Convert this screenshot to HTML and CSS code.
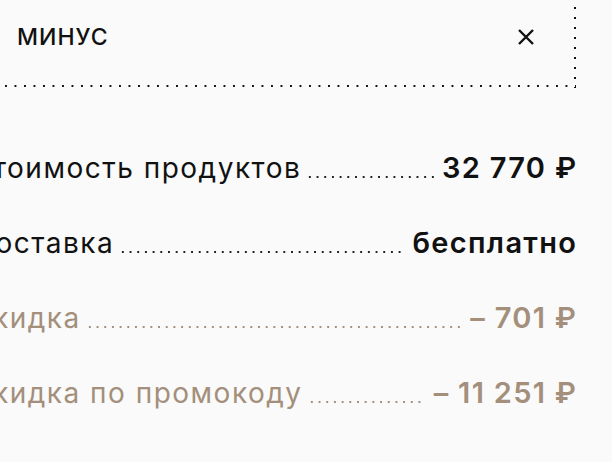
FILE: index.html
```html
<!DOCTYPE html>
<html lang="ru">
<head>
    <meta charset="UTF-8">
    <meta name="viewport" content="width=device-width, initial-scale=1.0">
    <title>Корзина</title>
    <link rel="stylesheet" href="styles.css">
</head>
<body>

    <div class="cart-summary">

        <!-- Applied promo code -->
        <div class="promo">
            <span class="promo-code">МИНУС</span>
            <button class="promo-clear" aria-label="Удалить промокод">
                <svg width="18" height="18" viewBox="0 0 18 18">
                    <path d="M2 2 L16 16 M16 2 L2 16" stroke="#111" stroke-width="2.4" fill="none"/>
                </svg>
            </button>
        </div>

        <!-- Order totals -->
        <ul class="totals">
            <li class="totals-row">
                <span class="totals-label">Стоимость продуктов</span>
                <span class="totals-leader"></span>
                <span class="totals-value">32 770 ₽</span>
            </li>
            <li class="totals-row">
                <span class="totals-label">Доставка</span>
                <span class="totals-leader"></span>
                <span class="totals-value">бесплатно</span>
            </li>
            <li class="totals-row discount">
                <span class="totals-label">Скидка</span>
                <span class="totals-leader"></span>
                <span class="totals-value">– 701 ₽</span>
            </li>
            <li class="totals-row discount">
                <span class="totals-label">Скидка по промокоду</span>
                <span class="totals-leader"></span>
                <span class="totals-value">– 11 251 ₽</span>
            </li>
        </ul>

    </div>

</body>
</html>
```

FILE: styles.css
```css
/* General */
body {
    margin: 0;
    background: #fafafa;
    color: #111;
    font-family: Inter, Roboto, sans-serif;
    overflow: hidden;
}

.cart-summary {
    width: 605px;
    margin-left: -29px;
}

/* Promo code field */
.promo {
    display: flex;
    align-items: center;
    justify-content: space-between;
    box-sizing: border-box;
    height: 88px;
    padding: 0 41px 14px 46px;
    background-image:
        linear-gradient(to bottom, #111 2px, transparent 2px),
        linear-gradient(to right, #111 2px, transparent 2px);
    background-size: 2px 10px, 9.5px 2px;
    background-repeat: repeat-y, repeat-x;
    background-position: right 0 top 7px, left 34px bottom 1px;
}

.promo-code {
    font-size: 23px;
    font-weight: 500;
    letter-spacing: 1px;
}

.promo-clear {
    display: flex;
    padding: 0;
    border: none;
    background: none;
    cursor: pointer;
}

/* Totals list */
.totals {
    list-style: none;
    margin: 63px 0 0;
    padding: 0;
    display: flex;
    flex-direction: column;
    gap: 41px;
}

.totals-row {
    display: flex;
    align-items: baseline;
    font-size: 28px;
    line-height: 34px;
}

.totals-label {
    letter-spacing: 1.5px;
}

.totals-leader {
    flex: 1;
    height: 2px;
    margin: 0 8px 0 5px;
    background-image: radial-gradient(circle, #222 0.85px, transparent 1.15px);
    background-size: 7.7px 2px;
    background-repeat: repeat-x;
}

.totals-value {
    font-size: 29px;
    font-weight: 600;
    letter-spacing: 1.3px;
    margin-right: -1.3px;
    white-space: nowrap;
}

/* Discounts */
.discount {
    color: #a38f7b;
}

.discount .totals-leader {
    background-image: radial-gradient(circle, #a38f7b 0.85px, transparent 1.15px);
}
```
